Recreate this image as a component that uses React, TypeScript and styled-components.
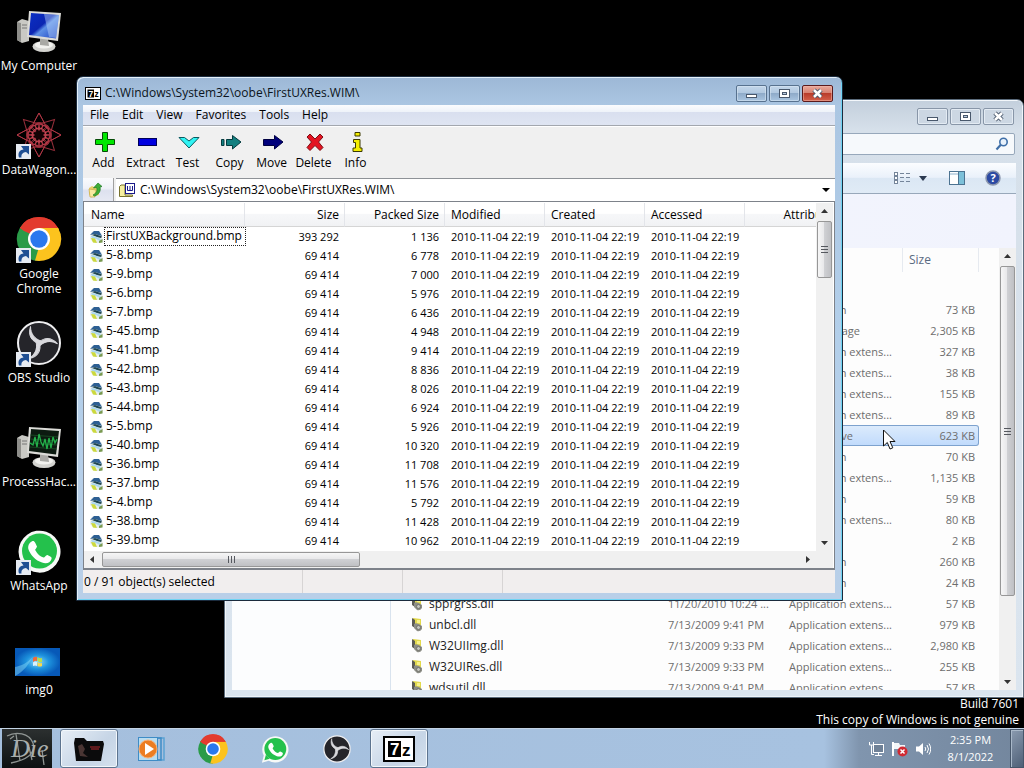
import React from "react";
import styled, { createGlobalStyle, css } from "styled-components";

const Global = createGlobalStyle`
  *, *::before, *::after { box-sizing: border-box; }
  html, body, #root { height: 100%; }
  body { margin: 0; background: #000; overflow: hidden; font: 12px/16px "Open Sans", "Noto Sans", sans-serif; }
  button, input { font: inherit; color: inherit; border: 0; padding: 0; margin: 0; background: none; outline: 0; }
  svg { display: block; flex: none; }
`;

const Screen = styled.div`
  display: flex;
  flex-direction: column;
  height: 100vh;
  overflow: hidden;
  background: #000;
`;
const Desktop = styled.main`
  position: relative;
  flex: 1;
  min-height: 0;
`;

/* ---------- desktop shortcuts ---------- */
const Shortcuts = styled.div`
  display: flex;
  flex-direction: column;
  width: 78px;
`;
const Shortcut = styled.button`
  display: flex;
  flex-direction: column;
  align-items: center;
  height: 104px;
  padding-top: 7px;
  color: #fff;
  line-height: 15px;
`;
const ShortcutArt = styled.span`
  display: block;
  position: relative;
  width: 48px;
  height: 51px;
`;
const ShortcutBadge = styled.span`
  position: absolute;
  left: 0;
  bottom: 3px;
`;
const ShortcutLabel = styled.span<{ $wrap?: boolean }>`
  width: ${(p) => (p.$wrap ? "60px" : "auto")};
  white-space: ${(p) => (p.$wrap ? "normal" : "nowrap")};
  text-align: center;
`;
const Watermark = styled.p`
  position: absolute;
  right: 5px;
  bottom: 0;
  margin: 0;
  color: #fff;
  font-size: 12px;
  line-height: 16px;
  text-align: right;
  white-space: pre-line;
`;

/* ---------- window frame ---------- */
const Frame = styled.section<{ $active?: boolean }>`
  position: absolute;
  display: flex;
  flex-direction: column;
  border: 1px solid ${(p) => (p.$active ? "#1b2b3d" : "#5b6b7b")};
  border-radius: 7px 7px 0 0;
  ${(p) =>
    p.$active
      ? css`
          left: 76px;
          right: 181px;
          top: 76px;
          bottom: 127px;
          padding: 0 7px 7px 6px;
          background: linear-gradient(#9db8d6 0, #abc6e2 28px, #b3cfea 50%, #b9cfe8 100%);
          box-shadow: inset 1px 1px 0 #e4f0fa, inset -1px -1px 0 #6fd3f3;
        `
      : css`
          left: 224px;
          right: 0;
          top: 99px;
          bottom: 30px;
          padding: 0 7px 7px;
          background: linear-gradient(#c3cfdc 0, #d6e0ea 30px, #dbe5ef 100%);
          box-shadow: inset 1px 1px 0 #f3f7fb, inset -1px -1px 0 #eef4f9;
        `}
`;
const TitleBar = styled.header<{ $active?: boolean }>`
  display: flex;
  align-items: center;
  gap: 4px;
  height: ${(p) => (p.$active ? 28 : 33)}px;
  flex: none;
  padding: ${(p) => (p.$active ? "4px 2px 0" : "0 2px")};
  color: #0b1420;
`;
const Title = styled.h1`
  flex: 1;
  margin: 0;
  font-size: 12px;
  font-weight: 400;
  white-space: nowrap;
`;
const Captions = styled.div`
  display: flex;
  gap: 2px;
`;
const Caption = styled.button<{ $look: "blue" | "red" | "pale" }>`
  display: grid;
  place-items: center;
  width: 31px;
  height: 17px;
  border: 1px solid;
  border-radius: 2px;
  ${(p) =>
    p.$look === "red"
      ? css`
          border-color: #5a1a1c;
          background: linear-gradient(#e9a99b 0, #d67f70 48%, #b93c2b 50%, #d4604b 100%);
          box-shadow: inset 0 0 0 1px #f0b8ab88;
        `
      : p.$look === "blue"
      ? css`
          border-color: #58728f;
          background: linear-gradient(#c3d6ea 0, #b1c8e0 48%, #8fabc9 50%, #a9c5e1 100%);
          box-shadow: inset 0 0 0 1px #dbe8f488;
        `
      : css`
          border-color: #8896a8;
          background: #ccd7e3;
          box-shadow: inset 0 0 0 1px #e3ebf3;
        `}
`;

/* ---------- archive manager ---------- */
const ArchiveBody = styled.div`
  flex: 1;
  min-height: 0;
  display: flex;
  flex-direction: column;
  background: #f0f0f0;
  color: #000;
`;
const MenuBar = styled.nav`
  display: flex;
  height: 21px;
  flex: none;
  padding-left: 7px;
  gap: 13px;
  align-items: center;
  background: linear-gradient(#fbfcfe 0, #eef2f9 35%, #d9dfef 36%, #dfe5f2 100%);
  border-bottom: 1px solid #a3a7ae;
`;
const MenuItem = styled.button`
  line-height: 18px;
`;
const ToolBar = styled.div`
  display: flex;
  height: 52px;
  flex: none;
  border-top: 1px solid #fff;
`;
const ToolButton = styled.button`
  display: flex;
  flex-direction: column;
  align-items: center;
  width: 42px;
  padding: 4px 1px 0 0;
  gap: 2px;
  white-space: nowrap;
  svg { margin-left: 2px; }
`;
const AddressRow = styled.div`
  display: flex;
  height: 23px;
  flex: none;
`;
const UpButton = styled.button`
  display: grid;
  place-items: center;
  width: 31px;
  padding-right: 6px;
  background: linear-gradient(#fafbfd 0, #eff1f8 45%, #dde1ef 55%, #e6e9f3 100%);
  border-right: 1px solid #a0a0a0;
`;
const AddressBox = styled.label`
  flex: 1;
  display: flex;
  align-items: center;
  gap: 4px;
  margin-left: 2px;
  padding: 0 5px 0 3px;
  background: #fff;
  border-top: 1px solid #8e9297;
  input { flex: 1; min-width: 0; }
`;
const ListBox = styled.div`
  flex: 1;
  min-height: 0;
  display: grid;
  grid-template: minmax(0, 1fr) 17px / minmax(0, 1fr) 17px;
  padding: 1px 1px 0 0;
  border: 1px solid #7d828a;
  border-width: 1px 1px 2px;
  background: #fff;
`;
const ListView = styled.div`
  overflow: hidden;
`;
const FileTable = styled.table`
  width: 761px;
  table-layout: fixed;
  border-collapse: separate;
  border-spacing: 0;
  white-space: nowrap;
  font-size: 11px;
`;
const HeadCell = styled.th<{ $right?: boolean }>`
  height: 24px;
  padding: 0 5px 0 6px;
  font-size: 12px;
  font-weight: 400;
  text-align: ${(p) => (p.$right ? "right" : "left")};
  border-right: 1px solid #e3e5ea;
  border-bottom: 1px solid #d5d5d5;
  background: linear-gradient(#fff 0, #fff 45%, #f6f7f9 50%, #f1f2f4 100%);
  &:first-child { padding-left: 7px; }
`;
const Cell = styled.td<{ $right?: boolean }>`
  height: 19px;
  padding: 0 6px;
  text-align: ${(p) => (p.$right ? "right" : "left")};
`;
const FileName = styled.span<{ $focus?: boolean }>`
  display: flex;
  align-items: center;
  gap: 1px;
  height: 19px;
  font-size: 12px;
  span {
    padding: 0 4px 0 2px;
    height: 19px;
    line-height: 18px;
    outline: ${(p) => (p.$focus ? "1px dotted #222" : "none")};
    outline-offset: -1px;
  }
`;
const Status = styled.footer`
  display: grid;
  grid-template-columns: 219px 100px 100px 1fr;
  height: 23px;
  flex: none;
  background: #f1eeee;
  span { padding-left: 1px; line-height: 23px; }
  span + span { border-left: 1px solid #d7d4d4; }
`;

/* ---------- scroll bars ---------- */
const Bar = styled.div<{ $across?: boolean }>`
  display: flex;
  flex-direction: ${(p) => (p.$across ? "row" : "column")};
  background: #f0f0f0;
  min-height: 0;
`;
const BarButton = styled.button`
  display: grid;
  place-items: center;
  width: 17px;
  height: 17px;
  flex: none;
`;
const Track = styled.div<{ $across?: boolean }>`
  flex: 1;
  min-height: 0;
  display: flex;
  flex-direction: ${(p) => (p.$across ? "row" : "column")};
`;
const Thumb = styled.div<{ $across?: boolean; $size: string }>`
  display: grid;
  place-items: center;
  margin: 1px;
  border: 1px solid #979797;
  border-radius: 2px;
  ${(p) =>
    p.$across
      ? css`
          width: ${p.$size};
          background: linear-gradient(#f6f6f6 0, #e8e8ea 45%, #cfd0d3 50%, #bfc0c4 100%);
        `
      : css`
          height: ${p.$size};
          background: linear-gradient(90deg, #f6f6f6 0, #e8e8ea 45%, #cfd0d3 50%, #bfc0c4 100%);
        `}
`;
const Corner = styled.div`
  background: #f0f0f0;
`;

/* ---------- explorer ---------- */
const SearchRow = styled.div`
  display: flex;
  justify-content: flex-end;
  flex: none;
  padding: 0 1px 8px;
`;
const SearchBox = styled.label`
  display: flex;
  align-items: center;
  width: 236px;
  height: 22px;
  padding: 0 5px;
  border: 1px solid #97a8bb;
  border-radius: 2px;
  background: #f6f9fc;
  color: #6d6d6d;
  font-size: 11px;
  font-style: italic;
  input { flex: 1; min-width: 0; }
`;
const ExplorerBody = styled.div`
  flex: 1;
  min-height: 0;
  display: flex;
  flex-direction: column;
  background: #fdfdfd;
`;
const CommandBar = styled.div`
  display: flex;
  justify-content: flex-end;
  align-items: center;
  flex: none;
  height: 31px;
  padding-right: 15px;
  background: linear-gradient(#fbfdff 0, #eaf1fa 48%, #dbe7f4 50%, #e0ebf6 100%);
  border-bottom: 1px solid #98a8ba;
`;
const CommandButton = styled.button<{ $gap: number }>`
  margin-left: ${(p) => p.$gap}px;
`;
const Panes = styled.div`
  flex: 1;
  min-height: 0;
  display: grid;
  grid-template-columns: 159px minmax(0, 1fr);
`;
const NavPane = styled.aside`
  border-right: 1px solid #d9e3ee;
  background: #fcfdfe;
`;
const FilePane = styled.div`
  display: flex;
  flex-direction: column;
  min-height: 0;
`;
const LibraryBand = styled.div`
  height: 54px;
  flex: none;
  background: linear-gradient(90deg, #f4f7fd, #f1f3fd);
`;
const FileArea = styled.div`
  flex: 1;
  min-height: 0;
  display: flex;
`;
const ExplorerList = styled.div`
  flex: 1;
  min-width: 0;
  overflow: hidden;
  padding-right: 20px;
`;
const ExplorerTable = styled.table`
  width: 100%;
  table-layout: fixed;
  border-collapse: separate;
  border-spacing: 0;
  white-space: nowrap;
  color: #6d6d6d;
  font-size: 11px;
`;
const ExplorerHead = styled.th`
  height: 24px;
  padding: 0 6px;
  font-size: 12px;
  font-weight: 400;
  text-align: left;
  color: #5a6b82;
  border-right: 1px solid #e6eaf0;
`;
const GroupRow = styled.td`
  height: 27px;
  padding: 0;
`;
const ExplorerCell = styled.td<{ $right?: boolean; $selected?: boolean }>`
  height: 21px;
  padding: 0 4px 0 6px;
  overflow: hidden;
  text-align: ${(p) => (p.$right ? "right" : "left")};
  ${(p) =>
    p.$selected &&
    css`
      background: linear-gradient(#dcebfc, #c1dbfc);
      border: solid #7da2ce;
      border-width: 1px 0;
      &:last-child { border-right-width: 1px; padding-right: 3px; border-radius: 0 3px 3px 0; }
    `}
`;
const DllName = styled.span`
  display: flex;
  align-items: center;
  gap: 5px;
  padding-left: 15px;
  color: #1d1d1d;
  font-size: 12px;
`;
const Pointer = styled.div`
  position: absolute;
  left: 882px;
  top: 429px;
`;

/* ---------- taskbar ---------- */
const TaskBar = styled.footer`
  display: flex;
  flex: none;
  height: 40px;
  border-top: 1px solid #c3d3e4;
  background: linear-gradient(90deg, #a5bfdd 0, #a7c2e0 calc(100% - 200px), #8095ae calc(100% - 165px), #73869d 100%);
`;
const StartButton = styled.button`
  width: 50px;
  margin: 0 8px 0 2px;
  background: linear-gradient(#2c3030, #0d1112);
`;
const TaskButton = styled.button<{ $open?: boolean }>`
  display: grid;
  place-items: center;
  width: 58px;
  margin-right: 4px;
  border: 1px solid transparent;
  border-radius: 3px;
  ${(p) =>
    p.$open &&
    css`
      border-color: #5d748f;
      background: linear-gradient(135deg, #e7eef6, #c6d5e6 60%, #d5e1ee);
      box-shadow: inset 0 0 0 1px #f2f7fb;
    `}
`;
const Tray = styled.div`
  display: flex;
  align-items: center;
  gap: 7px;
  margin-left: auto;
`;
const TrayButton = styled.button``;
const Clock = styled.time`
  width: 79px;
  padding-top: 2px;
  color: #fff;
  font-size: 11px;
  line-height: 17px;
  text-align: center;
  white-space: pre-line;
`;
const ShowDesktop = styled.button`
  width: 14px;
  border: 1px solid #46566a;
  background: linear-gradient(135deg, #8b9bb0, #4f6077);
  box-shadow: inset 1px 1px 0 #a9b8c9;
`;

/* ---------- drawings ---------- */
const LinkArrow = () => (
  <svg width="16" height="15" viewBox="0 0 16 15">
    <rect x="1" width="15" height="15" fill="#e6ebf2" />
    <path d="M4 13.500C2.500 9 4.500 6 8.500 5.500L6 2H14V10.500L11 8C8 8.500 6 10 6.500 13.500Z" fill="#1f4f93" />
  </svg>
);

const Computer = ({ wave }: { wave?: boolean }) => (
  <svg width="48" height="48" viewBox="0 -2 48 48">
    <defs>
      <linearGradient id="screenBlue" x1="0" x2="1" y1="0" y2="1">
        <stop offset="0" stopColor="#0a2fc4" />
        <stop offset=".45" stopColor="#0b25b2" />
        <stop offset=".55" stopColor="#5d90e6" />
        <stop offset="1" stopColor="#1c3fc0" />
      </linearGradient>
    </defs>
    <path d="M2 13L7 10L14 12V32L7 34L2 31Z" fill="#c9c9c4" />
    <path d="M2 13L6 14V33L2 31Z" fill="#8e8e8a" />
    <path d="M7 16H12M7 19H12" stroke="#777" />
    <ellipse cx="29" cy="37.500" rx="11.500" ry="5.500" fill="#d4d4d0" />
    <ellipse cx="29" cy="36" rx="9" ry="3.500" fill="#f2f2ef" />
    <path d="M25 29L33 30L34 37L25 36Z" fill="#a9a9a5" />
    <path d="M14 2L46 4L43 32L12 28Z" fill="#dcdcd8" />
    <path d="M16 4L44 6L41 29.500L14 26Z" fill={wave ? "#0c1a10" : "url(#screenBlue)"} />
    {wave ? (
      <>
        <path d="M15 10L43 12M15 14L43 16M15 18L42 20M15 22L42 24" stroke="#1d5a2a" strokeWidth=".7" />
        <path d="M15 18L18 20L20 12L22 22L24 9L26 17L28 21L30 14L32 24L34 13L36 23L38 12L40 18L42 14" fill="none" stroke="#23b14a" strokeWidth="1.300" />
      </>
    ) : (
      <path d="M29 5L44 6L41 29L34 28Z" fill="#b8d4fa" opacity=".45" />
    )}
  </svg>
);

const spokes = [0, 45, 90, 135, 180, 225, 270, 315];
const Rosette = () => (
  <svg width="48" height="48" viewBox="0 0 48 48">
    <g fill="none" stroke="#b83a48" strokeWidth="1">
      {spokes.map((a) => (
        <g key={a} transform={`rotate(${a} 24 24)`}>
          <path d="M24 2L16 17L24 24L32 17ZM24 2L12 24M24 2L36 24" opacity=".8" />
          <circle cx="24" cy="15" r="3.500" />
        </g>
      ))}
      <circle cx="24" cy="24" r="12.500" stroke="#8d2733" />
      <circle cx="24" cy="24" r="7" stroke="#d4505c" />
    </g>
    <circle cx="24" cy="24" r="4.500" fill="#140204" />
  </svg>
);

const Chrome = ({ size }: { size: number }) => (
  <svg width={size} height={size} viewBox="0 0 48 48">
    <path d="M24 24L4.900 13A22 22 0 0 1 43.100 13Z" fill="#e33b2e" />
    <path d="M24 24L43.100 13A22 22 0 0 1 24 46Z" fill="#fcc31e" />
    <path d="M24 24L24 46A22 22 0 0 1 4.900 13Z" fill="#2a9b48" />
    <path d="M24 13H43.100A22 22 0 0 1 44 15L30 24Z" fill="#fcc31e" />
    <path d="M33.500 29.500L24 46L20 45.500L24 32Z" fill="#fcc31e" />
    <path d="M14.500 29.500L4.900 13L8 9L18 24Z" fill="#2a9b48" />
    <path d="M4.900 13A22 22 0 0 1 43.100 13H24L14.500 18.500L9 16Z" fill="#e33b2e" />
    <circle cx="24" cy="24" r="11" fill="#fff" />
    <circle cx="24" cy="24" r="8.700" fill="#2a78ee" />
  </svg>
);

const Obs = ({ size }: { size: number }) => (
  <svg width={size} height={size} viewBox="0 0 48 48">
    <circle cx="24" cy="24" r="21" fill="#25252a" stroke="#eeeef0" strokeWidth="2" />
    {[0, 120, 240].map((a) => (
      <path key={a} transform={`rotate(${a} 24 24)`} d="M24.500 25C17 22.500 12.500 17 15.500 7.500C15.500 15 20 20 26 22Z" fill="#d9d9dd" stroke="#d9d9dd" strokeWidth="1" />
    ))}
  </svg>
);

const WhatsApp = ({ size }: { size: number }) => (
  <svg width={size} height={size} viewBox="0 0 48 48">
    <path d="M3 46L6 34.500A21 21 0 1 1 14 42.800Z" fill="#f7f9f7" />
    <circle cx="24.500" cy="24" r="17.500" fill="#24c14c" />
    <path d="M7 42L9.500 33L15.500 39.500Z" fill="#24c14c" />
    <path d="M17.500 14C19 13.500 20 14.500 22 19.500C21.500 21.500 19.500 22.500 20.500 23.500C22.500 27 25 29.500 28.500 30.500C30 30.500 31 27.500 32.500 28C36.500 30 37 30.500 36.500 32C35.500 36 31 37 27 35.500C20.500 33.500 15.500 28 13.500 22.500C12.500 19 14 15.500 17.500 14Z" fill="#fff" />
  </svg>
);

const Wallpaper = () => (
  <svg width="48" height="48" viewBox="0 -2 48 48">
    <defs>
      <radialGradient id="wall">
        <stop offset="0" stopColor="#8fdcf8" />
        <stop offset=".5" stopColor="#1e93de" />
        <stop offset="1" stopColor="#0759b8" />
      </radialGradient>
    </defs>
    <rect x="0" y="15" width="45" height="28" fill="url(#wall)" />
    <path d="M0 43C10 38 14 30 18 24C12 30 6 33 0 34Z" fill="#7fd5f5" opacity=".5" />
    <path d="M18 25Q20 23 22 24V28Q20 27 18 29Z" fill="#f06a3a" />
    <path d="M22.500 24Q25 26 27 25V29Q25 30 22.500 28Z" fill="#b5dd4e" />
    <path d="M18 29.500Q20 28 22 29V33Q20 32 18 33Z" fill="#d7f1ff" />
    <path d="M22.500 29Q25 31 27 30V33Q25 34 22.500 33Z" fill="#fbd84b" />
  </svg>
);

const SevenZip = ({ large }: { large?: boolean }) => (
  <svg width={large ? 32 : 16} height={large ? 26 : 13} viewBox="0 0 32 26">
    <rect x="1" y="1" width="30" height="24" fill="#fff" stroke="#000" strokeWidth="2" />
    <rect x="5" y="5" width="13" height="16" fill="#000" />
    <text x="7" y="19" fontFamily="Liberation Sans, sans-serif" fontWeight="700" fontSize="17" fill="#fff">7</text>
    <text x="19" y="20" fontFamily="Liberation Sans, sans-serif" fontWeight="700" fontSize="17" fill="#000">z</text>
  </svg>
);

const MinGlyph = () => (
  <svg width="13" height="11"><rect x="1.500" y="6.500" width="10" height="3" fill="#fff" stroke="#49586c" /></svg>
);
const MaxGlyph = () => (
  <svg width="13" height="11"><rect x="1.500" y="1.500" width="10" height="8" fill="#fff" stroke="#49586c" /><rect x="4.500" y="4.500" width="4" height="2" fill="#b9cbe0" stroke="#49586c" /></svg>
);
const CloseGlyph = () => (
  <svg width="13" height="11" viewBox="0 0 13 11">
    <path d="M3 2L10 9M10 2L3 9" stroke="#49586c" strokeWidth="4.500" />
    <path d="M3 2L10 9M10 2L3 9" stroke="#fff" strokeWidth="2.500" />
  </svg>
);
const WindowButtons = ({ active }: { active?: boolean }) => (
  <Captions>
    <Caption $look={active ? "blue" : "pale"} aria-label="Minimize"><MinGlyph /></Caption>
    <Caption $look={active ? "blue" : "pale"} aria-label="Maximize"><MaxGlyph /></Caption>
    <Caption $look={active ? "red" : "pale"} aria-label="Close"><CloseGlyph /></Caption>
  </Captions>
);

const arrows = { up: "M0 5L3.500 1L7 5Z", down: "M0 2L3.500 6L7 2Z", left: "M5 0L1 3.500L5 7Z", right: "M2 0L6 3.500L2 7Z" };
const Arrow = ({ to }: { to: keyof typeof arrows }) => (
  <svg width="7" height="7"><path d={arrows[to]} fill="#333" /></svg>
);
const Grip = ({ across }: { across?: boolean }) => (
  <svg width="9" height="9">
    <path d={across ? "M1.500 1V8M4.500 1V8M7.500 1V8" : "M1 1.500H8M1 4.500H8M1 7.500H8"} stroke="#55585e" />
  </svg>
);

const BitmapIcon = () => (
  <svg width="13" height="14" viewBox="0 0 13 14">
    <path d="M3 1H9L12 4L13 12L10 13L4 13L0 9L1 3Z" fill="#e6ecec" />
    <path d="M0 5L4 1L9 1L12 6L8 5L5 4Z" fill="#2d5f93" />
    <path d="M2 5L5 4L12 6.500L11 8L7 7Z" fill="#1f4650" />
    <path d="M1 6L5 6.500L11 9L10 11L6 9L2 8Z" fill="#a9d6ee" />
    <path d="M1 8L5 8.500L7 13L3 12.500Z" fill="#ccd93c" />
    <path d="M9 11L12.500 9V12.500L9 13Z" fill="#7a9a50" />
  </svg>
);
const DllIcon = () => (
  <svg width="12" height="15" viewBox="0 0 12 15">
    <path d="M1 1L9 2V9L6 12L1 9Z" fill="#e2d94c" />
    <path d="M5 3H8V6H5Z" fill="#f7f28c" />
    <path d="M0 1L3 3V11L0 9Z" fill="#5b5b55" />
    <path d="M2 7Q5 5 10 9V12Q8 15 5 14L2 11Z" fill="#8c8d86" />
    <circle cx="6.500" cy="10.500" r="2" fill="#c4c5be" stroke="#686961" strokeWidth=".8" />
  </svg>
);

const toolArt: Record<string, React.ReactNode> = {
  Add: <path d="M8.500 1.500H13.500V8.500H20.500V13.500H13.500V20.500H8.500V13.500H1.500V8.500H8.500Z" fill="#00e800" stroke="#064a06" />,
  Extract: <rect x="2.500" y="7.500" width="18" height="7" fill="#0000e0" stroke="#000058" />,
  Test: <path d="M1 6.500H6.500L11 10L15.500 6.500H21L11 17Z" fill="#2ff4f4" stroke="#0b5a60" />,
  Copy: <path d="M1.500 8.500H4V14.500H1.500ZM6.500 8.500H12.500V4.500L21 11L12.500 18V14.500H6.500Z" fill="#138080" stroke="#053b3f" />,
  Move: <path d="M1.500 8.500H12.500V4.500L21 11L12.500 18V14.500H1.500Z" fill="#00007c" stroke="#000040" />,
  Delete: <path d="M3 6L6 3L11 8L16 3L19 6L14.500 11L19 16.500L16 19.500L11 14.500L6 19.500L3 16.500L7.500 11Z" fill="#e31422" stroke="#7d0d14" />,
  Info: <path d="M9 1.500H14V5H9ZM7.500 8.500H14V17H16V20.500H7V17H9.500V11.500H7.500Z" fill="#f4ee00" stroke="#3d3b00" />,
};

const archiveRows: [string, string, string][] = [
  ["FirstUXBackground.bmp", "393 292", "1 136"],
  ["5-8.bmp", "69 414", "6 778"],
  ["5-9.bmp", "69 414", "7 000"],
  ["5-6.bmp", "69 414", "5 976"],
  ["5-7.bmp", "69 414", "6 436"],
  ["5-45.bmp", "69 414", "4 948"],
  ["5-41.bmp", "69 414", "9 414"],
  ["5-42.bmp", "69 414", "8 836"],
  ["5-43.bmp", "69 414", "8 026"],
  ["5-44.bmp", "69 414", "6 924"],
  ["5-5.bmp", "69 414", "5 926"],
  ["5-40.bmp", "69 414", "10 320"],
  ["5-36.bmp", "69 414", "11 708"],
  ["5-37.bmp", "69 414", "11 576"],
  ["5-4.bmp", "69 414", "5 792"],
  ["5-38.bmp", "69 414", "11 428"],
  ["5-39.bmp", "69 414", "10 962"],
];
const stamp = "2010-11-04 22:19";

const APP = "Application";
const EXT = "Application extens...";
const explorerRows: { name?: string; date?: string; type: string; size: string; selected?: boolean }[] = [
  { type: APP, size: "73 KB" },
  { type: "Bitmap image", size: "2,305 KB" },
  { type: EXT, size: "327 KB" },
  { type: EXT, size: "38 KB" },
  { type: EXT, size: "155 KB" },
  { type: EXT, size: "89 KB" },
  { type: "WIM Archive", size: "623 KB", selected: true },
  { type: APP, size: "70 KB" },
  { type: EXT, size: "1,135 KB" },
  { type: APP, size: "59 KB" },
  { type: EXT, size: "80 KB" },
  { type: "File", size: "2 KB" },
  { type: APP, size: "260 KB" },
  { type: APP, size: "24 KB" },
  { name: "spprgrss.dll", date: "11/20/2010 10:24 ...", type: EXT, size: "57 KB" },
  { name: "unbcl.dll", date: "7/13/2009 9:41 PM", type: EXT, size: "979 KB" },
  { name: "W32UIImg.dll", date: "7/13/2009 9:33 PM", type: EXT, size: "2,980 KB" },
  { name: "W32UIRes.dll", date: "7/13/2009 9:33 PM", type: EXT, size: "255 KB" },
  { name: "wdsutil.dll", date: "7/13/2009 9:41 PM", type: EXT, size: "57 KB" },
];

const shortcuts: { label: string; art: React.ReactNode; link?: boolean; wrap?: boolean }[] = [
  { label: "My Computer", art: <Computer /> },
  { label: "DataWagon...", art: <Rosette />, link: true },
  { label: "Google Chrome", art: <Chrome size={48} />, link: true, wrap: true },
  { label: "OBS Studio", art: <Obs size={48} />, link: true },
  { label: "ProcessHac...", art: <Computer wave /> },
  { label: "WhatsApp", art: <WhatsApp size={48} />, link: true },
  { label: "img0", art: <Wallpaper /> },
];

const Explorer = () => (
  <Frame>
    <TitleBar>
      <Title />
      <WindowButtons />
    </TitleBar>
    <SearchRow>
      <SearchBox>
        <input aria-label="Search" />
        <svg width="14" height="14" viewBox="0 0 14 14">
          <circle cx="8.500" cy="5" r="3.700" fill="#e7f1fb" stroke="#3f6fa8" strokeWidth="1.600" />
          <path d="M5.800 7.800L1.500 12.500" stroke="#3f6fa8" strokeWidth="2.200" />
        </svg>
      </SearchBox>
    </SearchRow>
    <ExplorerBody>
      <CommandBar>
        <CommandButton $gap={0} aria-label="Change your view">
          <svg width="16" height="13">
            {[1, 5, 9].map((y) => (
              <g key={y}>
                <rect x=".5" y={y - 0.5} width="3" height="3" fill="#fff" stroke="#75859a" />
                <path d={`M6 ${y + 0.5}H10M12 ${y + 0.5}H16`} stroke="#75859a" />
              </g>
            ))}
          </svg>
        </CommandButton>
        <CommandButton $gap={9} aria-label="More view options">
          <svg width="8" height="5"><path d="M0 0H8L4 5Z" fill="#2c3a50" /></svg>
        </CommandButton>
        <CommandButton $gap={22} aria-label="Preview pane">
          <svg width="16" height="14">
            <rect x=".5" y=".5" width="15" height="13" fill="#fff" stroke="#4c7391" />
            <path d="M1 3H9" stroke="#8db1cc" />
            <rect x="10" y="1" width="5" height="12" fill="#7cc0d9" />
            <path d="M9.500 1V13" stroke="#4c7391" />
          </svg>
        </CommandButton>
        <CommandButton $gap={20} aria-label="Help">
          <svg width="16" height="16">
            <circle cx="8" cy="8" r="7" fill="#2c4aa3" stroke="#8c97ad" strokeWidth="1.500" />
            <text x="8" y="12" textAnchor="middle" fontFamily="Open Sans, sans-serif" fontWeight="700" fontSize="11" fill="#fff">?</text>
          </svg>
        </CommandButton>
      </CommandBar>
      <Panes>
        <NavPane />
        <FilePane>
          <LibraryBand />
          <FileArea>
            <ExplorerList>
              <ExplorerTable>
                <colgroup>
                  <col />
                  <col style={{ width: 121 }} />
                  <col style={{ width: 120 }} />
                  <col style={{ width: 76 }} />
                </colgroup>
                <thead>
                  <tr>
                    <ExplorerHead />
                    <ExplorerHead />
                    <ExplorerHead />
                    <ExplorerHead>Size</ExplorerHead>
                  </tr>
                </thead>
                <tbody>
                  <tr><GroupRow colSpan={4} /></tr>
                  {explorerRows.map((r, i) => (
                    <tr key={i}>
                      <ExplorerCell $selected={r.selected}>{r.name && <DllName><DllIcon />{r.name}</DllName>}</ExplorerCell>
                      <ExplorerCell $selected={r.selected}>{r.date}</ExplorerCell>
                      <ExplorerCell $selected={r.selected}>{r.type}</ExplorerCell>
                      <ExplorerCell $selected={r.selected} $right>{r.size}</ExplorerCell>
                    </tr>
                  ))}
                </tbody>
              </ExplorerTable>
            </ExplorerList>
            <Bar>
              <BarButton aria-label="Scroll up"><Arrow to="up" /></BarButton>
              <Track><Thumb $size="81%"><Grip /></Thumb></Track>
              <BarButton aria-label="Scroll down"><Arrow to="down" /></BarButton>
            </Bar>
          </FileArea>
        </FilePane>
      </Panes>
    </ExplorerBody>
  </Frame>
);

const Archive = () => (
  <Frame $active>
    <TitleBar $active>
      <SevenZip />
      <Title>C:\Windows\System32\oobe\FirstUXRes.WIM\</Title>
      <WindowButtons active />
    </TitleBar>
    <ArchiveBody>
      <MenuBar>
        {["File", "Edit", "View", "Favorites", "Tools", "Help"].map((m) => <MenuItem key={m}>{m}</MenuItem>)}
      </MenuBar>
      <ToolBar>
        {Object.entries(toolArt).map(([label, art]) => (
          <ToolButton key={label}>
            <svg width="22" height="22">{art}</svg>
            {label}
          </ToolButton>
        ))}
      </ToolBar>
      <AddressRow>
        <UpButton aria-label="Up one level">
          <svg width="15" height="16" viewBox="0 0 15 16">
            <path d="M1 6L4 4L6 5L11 4V13L3 15.500L1 12Z" fill="#e9cf6a" />
            <path d="M1 7L8 8L7 15L2 15Z" fill="#f8e9a0" stroke="#c9a845" strokeWidth=".7" />
            <path d="M5 13C9 11 9.500 8 8.500 5.500L5.500 6L10 1L14 4.500L12 5C13 9 11 12.500 6.500 14Z" fill="#3fae36" stroke="#1c7a22" strokeWidth=".7" />
          </svg>
        </UpButton>
        <AddressBox>
          <svg width="17" height="15" viewBox="0 0 17 15">
            <path d="M.5 3.500L2 2H6V12H13.500V13.500H.5Z" fill="#f7f0a0" stroke="#77712e" />
            <rect x="6.500" y=".5" width="9" height="10" fill="#fff" stroke="#1a1a8a" />
            <path d="M8.500 3V7.500H13.500V3M11 3V7" fill="none" stroke="#1a1a8a" />
          </svg>
          <input aria-label="Path" defaultValue="C:\Windows\System32\oobe\FirstUXRes.WIM\" />
          <svg width="8" height="5"><path d="M0 0H8L4 4Z" fill="#000" /></svg>
        </AddressBox>
      </AddressRow>
      <ListBox>
        <ListView>
          <FileTable>
            <colgroup>
              <col style={{ width: 161 }} />
              {[0, 1, 2, 3, 4, 5].map((i) => <col key={i} style={{ width: 100 }} />)}
            </colgroup>
            <thead>
              <tr>
                <HeadCell>Name</HeadCell>
                <HeadCell $right>Size</HeadCell>
                <HeadCell $right>Packed Size</HeadCell>
                <HeadCell>Modified</HeadCell>
                <HeadCell>Created</HeadCell>
                <HeadCell>Accessed</HeadCell>
                <HeadCell $right>Attributes</HeadCell>
              </tr>
            </thead>
            <tbody>
              {archiveRows.map(([name, size, packed], i) => (
                <tr key={name}>
                  <Cell><FileName $focus={i === 0}><BitmapIcon /><span>{name}</span></FileName></Cell>
                  <Cell $right>{size}</Cell>
                  <Cell $right>{packed}</Cell>
                  <Cell>{stamp}</Cell>
                  <Cell>{stamp}</Cell>
                  <Cell>{stamp}</Cell>
                  <Cell />
                </tr>
              ))}
            </tbody>
          </FileTable>
        </ListView>
        <Bar>
          <BarButton aria-label="Scroll up"><Arrow to="up" /></BarButton>
          <Track><Thumb $size="18%"><Grip /></Thumb></Track>
          <BarButton aria-label="Scroll down"><Arrow to="down" /></BarButton>
        </Bar>
        <Bar $across>
          <BarButton aria-label="Scroll left"><Arrow to="left" /></BarButton>
          <Track $across><Thumb $across $size="37%"><Grip across /></Thumb></Track>
          <BarButton aria-label="Scroll right"><Arrow to="right" /></BarButton>
        </Bar>
        <Corner />
      </ListBox>
      <Status>
        <span>0 / 91 object(s) selected</span>
        <span />
        <span />
        <span />
      </Status>
    </ArchiveBody>
  </Frame>
);

export default function App() {
  return (
    <Screen>
      <Global />
      <Desktop>
        <Shortcuts>
          {shortcuts.map((s) => (
            <Shortcut key={s.label}>
              <ShortcutArt>
                {s.art}
                {s.link && <ShortcutBadge><LinkArrow /></ShortcutBadge>}
              </ShortcutArt>
              <ShortcutLabel $wrap={s.wrap}>{s.label}</ShortcutLabel>
            </Shortcut>
          ))}
        </Shortcuts>
        <Watermark>{"Build 7601\nThis copy of Windows is not genuine"}</Watermark>
        <Explorer />
        <Archive />
        <Pointer>
          <svg width="15" height="22" viewBox="0 0 15 22">
            <path d="M1.500 1V17L5.300 13.500L8 20L10.800 18.800L8 12.500H13Z" fill="#fff" stroke="#111" />
          </svg>
        </Pointer>
      </Desktop>
      <TaskBar>
        <StartButton aria-label="Start">
          <svg width="50" height="38" viewBox="0 0 50 38">
            <path d="M5 6C14 1 27 3 31 13C34 24 24 30 9 33M14 4L18 31M27 17L30 30M40 20L42 35M8 9L12 6" fill="none" stroke="#8f9593" strokeWidth="1.300" />
            <text x="9" y="27" fontFamily="Liberation Serif, serif" fontStyle="italic" fontSize="26" fill="#a9aeac">Die</text>
          </svg>
        </StartButton>
        <TaskButton $open aria-label="File Explorer">
          <svg width="32" height="28" viewBox="0 0 32 28">
            <path d="M2 3H11L14 6H30L31 9L28 26H3L1 8Z" fill="#0b0b0c" />
            <path d="M5 11L9 9L12 14L10 18L15 22L7 21Z" fill="#4a3533" />
            <path d="M17 12H27M18 14H26" stroke="#7a1f22" strokeWidth="1.500" />
          </svg>
        </TaskButton>
        <TaskButton aria-label="Media Player">
          <svg width="30" height="28" viewBox="0 0 30 28">
            <path d="M20 3H28V25H20" fill="none" stroke="#5ba2d4" strokeWidth="1.500" />
            <path d="M20 3H25V25H20" fill="none" stroke="#3e8cc6" strokeWidth="1.500" />
            <rect x="2.500" y="2.500" width="19" height="23" fill="#b8dcf0" stroke="#3e8cc6" />
            <circle cx="12" cy="14" r="9" fill="#ec7d22" stroke="#f7b27a" />
            <path d="M9 8L18 14L9 20Z" fill="#fff" />
          </svg>
        </TaskButton>
        <TaskButton aria-label="Chrome"><Chrome size={32} /></TaskButton>
        <TaskButton aria-label="WhatsApp"><WhatsApp size={30} /></TaskButton>
        <TaskButton aria-label="OBS Studio"><Obs size={30} /></TaskButton>
        <TaskButton $open aria-label="7-Zip"><SevenZip large /></TaskButton>
        <Tray>
          <TrayButton aria-label="Network">
            <svg width="16" height="16" viewBox="0 0 16 16">
              <rect x="5.500" y="3.500" width="10" height="8" fill="#6f8197" stroke="#fff" />
              <path d="M7 14.500H14M10.500 12V14M1.500 1V4H5.500V1M3.500 4V13.500H6" fill="none" stroke="#fff" />
            </svg>
          </TrayButton>
          <TrayButton aria-label="Action Center">
            <svg width="17" height="16" viewBox="0 0 17 16">
              <path d="M2 1V15" stroke="#fff" strokeWidth="2" />
              <path d="M3 2H8L9 4H14V10H8L7 8H3Z" fill="#f3f6f9" />
              <circle cx="11.500" cy="10.500" r="5" fill="#d02a33" />
              <path d="M9.500 8.500L13.500 12.500M13.500 8.500L9.500 12.500" stroke="#fff" strokeWidth="1.500" />
            </svg>
          </TrayButton>
          <TrayButton aria-label="Volume">
            <svg width="16" height="16" viewBox="0 0 16 16">
              <path d="M1 5.500H4L8 2V14L4 10.500H1Z" fill="#fff" />
              <path d="M10 6Q11.500 8 10 10M12 4Q15 8 12 12M14 2.500Q17.500 8 14 13.500" fill="none" stroke="#fff" />
            </svg>
          </TrayButton>
        </Tray>
        <Clock>{"2:35 PM\n8/1/2022"}</Clock>
        <ShowDesktop aria-label="Show desktop" />
      </TaskBar>
    </Screen>
  );
}
